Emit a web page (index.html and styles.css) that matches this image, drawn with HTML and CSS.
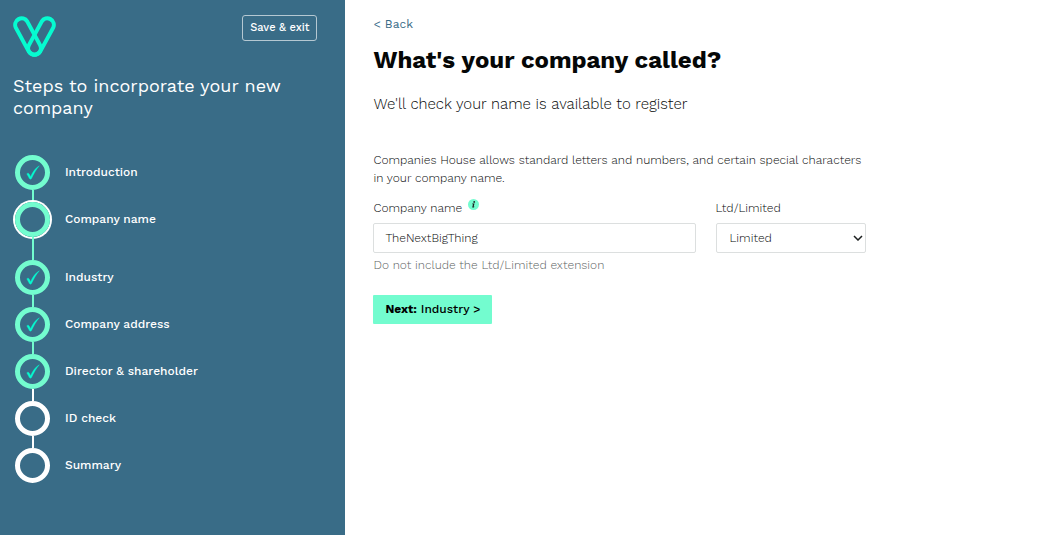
FILE: index.html
```html
<!DOCTYPE html>
<html lang="en">
<head>
    <meta charset="UTF-8">
    <meta name="viewport" content="width=device-width, initial-scale=1.0">
    <title>Company name</title>
    <link rel="stylesheet" href="styles.css">
</head>
<body>
    <div class="page">
        <aside class="sidebar">
            <div class="sidebar-top">
                <svg class="logo" viewBox="0 0 43 41" width="43" height="41" role="img" aria-label="Logo">
                    <path d="M14.2 5.4 L27.2 29.4 A6.5 6.5 0 0 1 15.8 35.6 L2.8 11.6 A6.5 6.5 0 0 1 14.2 5.4 Z"/>
                    <path d="M28.8 5.4 L15.8 29.4 A6.5 6.5 0 0 0 27.2 35.6 L40.2 11.6 A6.5 6.5 0 0 0 28.8 5.4 Z"/>
                </svg>
                <button type="button" class="save-button">Save &amp; exit</button>
            </div>
            <h2 class="sidebar-title">Steps to incorporate your new company</h2>
            <ol class="steps">
                <li class="step done">
                    <span class="marker"><span class="circle"><svg class="tick" viewBox="0 0 14 15"><path d="M.8 8.8 C1.8 7.9 2.8 8.2 3.3 9.2 L4.6 11.7 C6.8 6.7 9.3 3.2 13.3 .8 C9.9 4.8 7.6 9 5.5 13.6 C4.9 14.4 3.9 14.4 3.4 13.6 Z"/></svg></span></span>
                    <span class="label">Introduction</span>
                </li>
                <li class="step current">
                    <span class="marker"><span class="circle"></span></span>
                    <span class="label">Company name</span>
                </li>
                <li class="step done">
                    <span class="marker"><span class="circle"><svg class="tick" viewBox="0 0 14 15"><path d="M.8 8.8 C1.8 7.9 2.8 8.2 3.3 9.2 L4.6 11.7 C6.8 6.7 9.3 3.2 13.3 .8 C9.9 4.8 7.6 9 5.5 13.6 C4.9 14.4 3.9 14.4 3.4 13.6 Z"/></svg></span></span>
                    <span class="label">Industry</span>
                </li>
                <li class="step done">
                    <span class="marker"><span class="circle"><svg class="tick" viewBox="0 0 14 15"><path d="M.8 8.8 C1.8 7.9 2.8 8.2 3.3 9.2 L4.6 11.7 C6.8 6.7 9.3 3.2 13.3 .8 C9.9 4.8 7.6 9 5.5 13.6 C4.9 14.4 3.9 14.4 3.4 13.6 Z"/></svg></span></span>
                    <span class="label">Company address</span>
                </li>
                <li class="step done last-done">
                    <span class="marker"><span class="circle"><svg class="tick" viewBox="0 0 14 15"><path d="M.8 8.8 C1.8 7.9 2.8 8.2 3.3 9.2 L4.6 11.7 C6.8 6.7 9.3 3.2 13.3 .8 C9.9 4.8 7.6 9 5.5 13.6 C4.9 14.4 3.9 14.4 3.4 13.6 Z"/></svg></span></span>
                    <span class="label">Director &amp; shareholder</span>
                </li>
                <li class="step">
                    <span class="marker"><span class="circle"></span></span>
                    <span class="label">ID check</span>
                </li>
                <li class="step">
                    <span class="marker"><span class="circle"></span></span>
                    <span class="label">Summary</span>
                </li>
            </ol>
        </aside>

        <main class="content">
            <a href="#" class="back-link">&lt; Back</a>
            <h1>What's your company called?</h1>
            <p class="intro">We'll check your name is available to register</p>
            <form class="name-form">
                <p class="rules">Companies House allows standard letters and numbers, and certain special characters in your company name.</p>
                <div class="fields">
                    <div class="field">
                        <div class="field-label">
                            <label for="companyName">Company name</label>
                            <svg class="info" viewBox="0 0 11 11" width="11" height="11" role="img" aria-label="More information">
                                <circle class="info-disc" cx="5.5" cy="5.5" r="5.5"/>
                                <circle cx="6.2" cy="2.9" r=".9"/>
                                <path d="M4.3 4.5 H6.5 L5.7 7.6 H6.4 L6 8.5 H4.2 L5 5.3 H4.1 Z"/>
                            </svg>
                        </div>
                        <input type="text" id="companyName" value="TheNextBigThing" aria-describedby="nameHint">
                        <p class="hint" id="nameHint">Do not include the Ltd/Limited extension</p>
                    </div>
                    <div class="field">
                        <div class="field-label">
                            <label for="suffix">Ltd/Limited</label>
                        </div>
                        <div class="select-wrap">
                            <select id="suffix">
                                <option>Limited</option>
                                <option>Ltd</option>
                            </select>
                            <svg class="chevron" viewBox="0 0 10 6" width="10" height="6" aria-hidden="true"><path d="M1 1 L5 5 L9 1"/></svg>
                        </div>
                    </div>
                </div>
                <button type="button" class="next-button"><strong>Next:</strong> Industry &gt;</button>
            </form>
        </main>
    </div>
</body>
</html>
```
FILE: styles.css
```css
* {
    box-sizing: border-box;
}
body {
    margin: 0;
    background-color: #fff;
    color: #050707;
    font-family: "Work Sans", Inter, sans-serif;
    font-size: 12px;
    font-weight: 300;
    line-height: 18px;
}
button,
input,
select {
    font: inherit;
    color: inherit;
}
.page {
    display: grid;
    grid-template-columns: minmax(260px, 32.5%) 1fr;
    min-height: 100vh;
}

/* Sidebar */
.sidebar {
    padding: 15px 28px 20px 13px;
    background-color: #396c87;
    color: #fff;
}
.sidebar-top {
    display: flex;
    justify-content: space-between;
    align-items: flex-start;
}
.logo {
    margin-top: 1px;
    fill: none;
    stroke: #06fbd0;
    stroke-width: 4;
}
.save-button {
    padding: 3px 7px;
    border: 1px solid #b5c8d2;
    border-radius: 3px;
    background: none;
    font-size: 11px;
    font-weight: 500;
}
.sidebar-title {
    margin: 18px 0 36px;
    font-size: 18px;
    font-weight: 400;
    line-height: 22px;
}
.steps {
    margin: 0;
    padding: 0 2px;
    list-style: none;
}
.step {
    display: flex;
    gap: 15px;
    min-height: 47px;
}
.marker {
    display: flex;
    flex-direction: column;
    align-items: center;
    color: #fff;
}
.marker::after {
    content: "";
    flex: 1;
    width: 2px;
    background-color: currentColor;
}
.step:last-child .marker::after {
    display: none;
}
.done .marker,
.current .marker {
    color: #73fccf;
}
.last-done .marker::after {
    background-color: #fff;
}
.circle {
    display: flex;
    align-items: center;
    justify-content: center;
    width: 35px;
    height: 35px;
    border: 5px solid currentColor;
    border-radius: 50%;
}
.current {
    min-height: 58px;
}
.current .circle {
    box-shadow: 0 0 0 2px #fff;
}
.tick {
    width: 14px;
    height: 15px;
    fill: #06fbd0;
    stroke: #06fbd0;
    stroke-width: .4;
}
.label {
    font-weight: 500;
    line-height: 35px;
}

/* Main content */
.content {
    padding: 15px 28px;
}
.back-link {
    color: #396c87;
    font-weight: 400;
    text-decoration: none;
}
h1 {
    margin: 12px 0 20px;
    font-size: 24px;
    font-weight: 700;
    line-height: 30px;
}
.intro {
    margin: 0;
    font-size: 15px;
}
.name-form {
    max-width: 493px;
    margin-top: 38px;
}
.rules {
    margin: 0 0 12px;
}
.fields {
    display: grid;
    grid-template-columns: 32fr 15fr;
    gap: 20px;
}
.field-label {
    display: flex;
    gap: 6px;
    margin-bottom: 6px;
}
.info {
    fill: #1c1f1f;
}
.info-disc {
    fill: #73fccf;
}
input,
select {
    display: block;
    width: 100%;
    height: 30px;
    padding: 0 11px;
    border: 1px solid #dcdfdf;
    border-radius: 2px;
    background-color: #fff;
}
.select-wrap {
    display: grid;
    align-items: center;
}
.select-wrap > * {
    grid-area: 1 / 1;
}
select {
    padding: 0 13px;
    appearance: none;
}
.chevron {
    justify-self: end;
    margin-right: 3px;
    fill: none;
    stroke: #1c1f1f;
    stroke-width: 1.5;
    pointer-events: none;
}
.hint {
    margin: 3px 0 0;
    color: #5c6363;
}
.next-button {
    margin-top: 21px;
    padding: 5px 12px 6px;
    border: 0;
    border-radius: 1px;
    background-color: #73fccf;
    color: #000;
    font-weight: 500;
}
.next-button strong {
    font-weight: 700;
}
```
